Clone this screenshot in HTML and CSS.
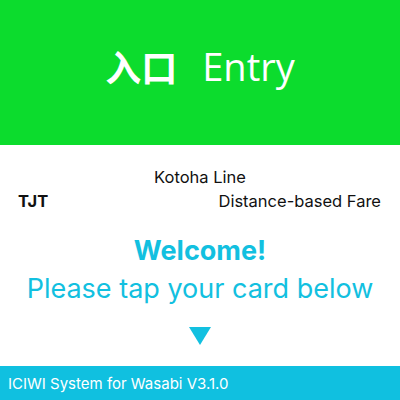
FILE: index.html
```html
<!DOCTYPE html>
<html>
<head>
<meta charset="utf-8">
<link rel="stylesheet" href="styles.css">
</head>
<body>
<div class="screen">
  <header class="header">
    <span class="jp">入口</span><span class="en">Entry</span>
  </header>
  <main class="main">
    <div class="line">Kotoha Line</div>
    <div class="info">
      <span class="op">TJT</span>
      <span class="fare">Distance-based Fare</span>
    </div>
    <div class="welcome">Welcome!</div>
    <div class="tap">Please tap your card below</div>
    <div class="arrow"></div>
  </main>
  <footer class="footer">ICIWI System for Wasabi V3.1.0</footer>
</div>
</body>
</html>
```
FILE: styles.css
```css
html, body {
  margin: 0;
  padding: 0;
  background: #fff;
}
.screen {
  width: 400px;
  height: 400px;
  display: flex;
  flex-direction: column;
  font-family: Inter, "Noto Sans", sans-serif;
}
.header {
  height: 145px;
  box-sizing: border-box;
  padding-bottom: 14px;
  background: #0cdc2d;
  color: #fff;
  display: flex;
  align-items: center;
  justify-content: center;
  gap: 25px;
}
.jp {
  font-family: "Noto Sans CJK SC", sans-serif;
  font-weight: 700;
  font-size: 36px;
}
.en {
  font-family: "Open Sans", sans-serif;
  font-size: 38px;
}
.main {
  flex: 1;
  display: flex;
  flex-direction: column;
  align-items: center;
  padding-top: 22px;
}
.line {
  font-size: 16.5px;
  color: #111;
  line-height: 20px;
}
.info {
  align-self: stretch;
  display: flex;
  justify-content: space-between;
  padding: 4px 19px 0 18px;
  font-size: 16.5px;
  line-height: 20px;
  color: #111;
}
.op { font-weight: 700; }
.welcome {
  margin-top: 24px;
  font-size: 27px;
  font-weight: 700;
  color: #12c0e0;
  line-height: 32px;
}
.tap {
  margin-top: 4px;
  font-size: 27px;
  color: #12c0e0;
  line-height: 36px;
}
.arrow {
  margin-top: 20px;
  width: 0;
  height: 0;
  border-left: 11.5px solid transparent;
  border-right: 11.5px solid transparent;
  border-top: 18px solid #12c0e0;
}
.footer {
  height: 34px;
  background: #10c0e0;
  color: #fff;
  font-size: 15px;
  display: flex;
  align-items: center;
  padding-left: 8px;
}
```
